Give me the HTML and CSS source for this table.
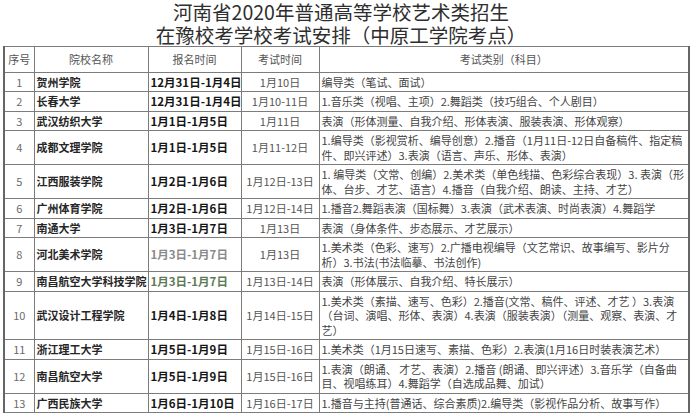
FILE: index.html
```html
<!DOCTYPE html>
<html lang="zh">
<head>
<meta charset="utf-8">
<title>河南省2020年普通高等学校艺术类招生</title>
<link rel="stylesheet" href="styles.css">
</head>
<body>
<div class="page">
  <div class="title">
    <div class="t1">河南省2020年普通高等学校艺术类招生</div>
    <div class="t2">在豫校考学校考试安排（中原工学院考点）</div>
  </div>
  <table class="grid">
    <colgroup>
      <col class="c1"><col class="c2"><col class="c3"><col class="c4"><col class="c5">
    </colgroup>
    <thead>
      <tr class="head">
        <th>序号</th><th>院校名称</th><th>报名时间</th><th>考试时间</th><th>考试类别（科目）</th>
      </tr>
    </thead>
    <tbody>
      <tr><td class="no">1</td><td class="name">贺州学院</td><td class="reg">12月31日-1月4日</td><td class="time">1月10日</td><td class="subj">编导类（笔试、面试）</td></tr>
      <tr><td class="no">2</td><td class="name">长春大学</td><td class="reg">12月31日-1月4日</td><td class="time">1月10-11日</td><td class="subj">1.音乐类（视唱、主项）2.舞蹈类（技巧组合、个人剧目）</td></tr>
      <tr><td class="no">3</td><td class="name">武汉纺织大学</td><td class="reg">1月1日-1月5日</td><td class="time">1月11日</td><td class="subj">表演（形体测量、自我介绍、形体表演、服装表演、形体观察）</td></tr>
      <tr><td class="no">4</td><td class="name">成都文理学院</td><td class="reg">1月1日-1月5日</td><td class="time">1月11-12日</td><td class="subj">1.编导类（影视赏析、编导创意）2.播音（1月11日-12日自备稿件、指定稿<br>件、即兴评述）3.表演（语言、声乐、形体、表演）</td></tr>
      <tr><td class="no">5</td><td class="name">江西服装学院</td><td class="reg">1月2日-1月6日</td><td class="time">1月12日-13日</td><td class="subj">1. 编导类（文常、创编）2.美术类（单色线描、色彩综合表现）3. 表演（形<br>体、台步、才艺、语言）4.播音（自我介绍、朗读、主持、才艺）</td></tr>
      <tr><td class="no">6</td><td class="name">广州体育学院</td><td class="reg">1月2日-1月6日</td><td class="time">1月12日-14日</td><td class="subj">1.播音2.舞蹈表演（国标舞）3.表演（武术表演、时尚表演）4.舞蹈学</td></tr>
      <tr><td class="no">7</td><td class="name">南通大学</td><td class="reg">1月3日-1月7日</td><td class="time">1月13日</td><td class="subj">表演（身体条件、步态展示、才艺展示）</td></tr>
      <tr><td class="no">8</td><td class="name">河北美术学院</td><td class="reg faded">1月3日-1月7日</td><td class="time">1月13日</td><td class="subj">1.美术类（色彩、速写）2.广播电视编导（文艺常识、故事编写、影片分<br>析）3.书法(书法临摹、书法创作)</td></tr>
      <tr><td class="no">9</td><td class="name">南昌航空大学科技学院</td><td class="reg green">1月3日-1月7日</td><td class="time">1月13日-14日</td><td class="subj">表演（形体展示、自我介绍、特长展示）</td></tr>
      <tr><td class="no">10</td><td class="name">武汉设计工程学院</td><td class="reg">1月4日-1月8日</td><td class="time">1月14日-15日</td><td class="subj">1.美术类（素描、速写、色彩）2.播音(文常、稿件、评述、才艺 ）3.表演<br>（台词、演唱、形体、表演）4.表演（服装表演）（测量、观察、表演、才<br>艺）</td></tr>
      <tr><td class="no">11</td><td class="name">浙江理工大学</td><td class="reg">1月5日-1月9日</td><td class="time">1月15日-16日</td><td class="subj">1.美术类（1月15日速写、素描、色彩）2.表演(1月16日时装表演艺术）</td></tr>
      <tr><td class="no">12</td><td class="name">南昌航空大学</td><td class="reg">1月5日-1月9日</td><td class="time">1月15日-16日</td><td class="subj">1.表演（朗诵、 才艺、表演）2.播音 (朗诵、即兴评述）3.音乐学（自备曲<br>目、视唱练耳）4.舞蹈学（自选成品舞、加试）</td></tr>
      <tr><td class="no">13</td><td class="name">广西民族大学</td><td class="reg">1月6日-1月10日</td><td class="time">1月16日-17日</td><td class="subj">1.播音与主持(普通话、综合素质)2.编导类（影视作品分析、故事写作）</td></tr>
    </tbody>
  </table>
</div>
</body>
</html>
```
FILE: styles.css
```css
html, body {
  margin: 0;
  padding: 0;
  background: #ffffff;
}
body {
  font-family: "Noto Sans CJK SC", "Noto Sans", sans-serif;
  color: #333;
}
.page {
  width: 691px;
  height: 414px;
  overflow: hidden;
}
.title {
  width: 682px;
  text-align: center;
  color: #2e2e2e;
  font-size: 19.5px;
  line-height: 23px;
}
.grid {
  margin: 0 0 0 3px;
  width: 685px;
  table-layout: fixed;
  border-collapse: collapse;
  border-left: 2px solid #666;
  border-right: 2px solid #666;
}
.c1 { width: 30px; }
.c2 { width: 114px; }
.c3 { width: 93px; }
.c4 { width: 78px; }
.c5 { width: 370px; }
.grid th,
.grid td {
  border: 1px solid #7c7c7c;
  padding: 2px 2px;
  line-height: 14.5px;
  white-space: nowrap;
  overflow: hidden;
  vertical-align: middle;
}
.grid th {
  font-weight: normal;
  font-size: 11px;
  color: #555;
  padding: 5px 2px;
  text-align: center;
}
.no {
  text-align: center;
  font-size: 11px;
  color: #6a6a6a;
}
.name {
  font-size: 11px;
  font-weight: bold;
  color: #262626;
}
.reg {
  font-size: 11.5px;
  font-weight: bold;
  color: #151515;
}
.reg.faded { color: #8a8a8a; }
.reg.green { color: #5d7a55; }
.time {
  text-align: center;
  font-size: 11px;
  color: #555;
}
.subj {
  font-size: 11px;
  color: #444;
}
```
